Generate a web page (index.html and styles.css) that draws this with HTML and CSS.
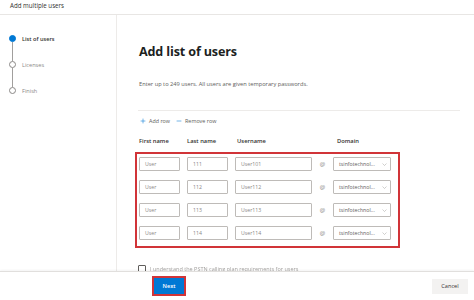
FILE: index.html
```html
<!DOCTYPE html>
<html>
<head>
<meta charset="utf-8">
<link rel="stylesheet" href="styles.css">
</head>
<body>
<div class="page">
  <div class="topbar">Add multiple users</div>
  <div class="main">
    <div class="sidebar">
      <div class="step active"><span class="dot"></span><span class="slabel">List of users</span></div>
      <div class="conn"></div>
      <div class="step"><span class="dot"></span><span class="slabel">Licenses</span></div>
      <div class="conn"></div>
      <div class="step"><span class="dot"></span><span class="slabel">Finish</span></div>
    </div>
    <div class="content">
      <h1 class="title">Add list of users</h1>
      <p class="desc">Enter up to 249 users. All users are given temporary passwords.</p>
      <div class="rule"></div>
      <div class="actions">
        <span class="act"><svg class="ico" viewBox="0 0 10 10"><path d="M5 1v8M1 5h8" stroke="#0078d4" stroke-width="0.9" fill="none"/></svg>Add row</span>
        <span class="act"><svg class="ico" viewBox="0 0 10 10"><path d="M1 5h8" stroke="#0078d4" stroke-width="0.9" fill="none"/></svg>Remove row</span>
      </div>
      <div class="heads">
        <span class="h h1">First name</span>
        <span class="h h2">Last name</span>
        <span class="h h3">Username</span>
        <span class="h h4">Domain</span>
      </div>
      <div class="grid">
        <div class="row">
          <div class="inp w1">User</div><div class="inp w1">111</div><div class="inp w3">User101</div><span class="at">@</span>
          <div class="inp sel">tsinfotechnol...<svg class="chev" viewBox="0 0 10 6"><path d="M1 1l4 4 4-4" stroke="#8a8886" stroke-width="0.8" fill="none"/></svg></div>
        </div>
        <div class="row">
          <div class="inp w1">User</div><div class="inp w1">112</div><div class="inp w3">User112</div><span class="at">@</span>
          <div class="inp sel">tsinfotechnol...<svg class="chev" viewBox="0 0 10 6"><path d="M1 1l4 4 4-4" stroke="#8a8886" stroke-width="0.8" fill="none"/></svg></div>
        </div>
        <div class="row">
          <div class="inp w1">User</div><div class="inp w1">113</div><div class="inp w3">User113</div><span class="at">@</span>
          <div class="inp sel">tsinfotechnol...<svg class="chev" viewBox="0 0 10 6"><path d="M1 1l4 4 4-4" stroke="#8a8886" stroke-width="0.8" fill="none"/></svg></div>
        </div>
        <div class="row">
          <div class="inp w1">User</div><div class="inp w1">114</div><div class="inp w3">User114</div><span class="at">@</span>
          <div class="inp sel">tsinfotechnol...<svg class="chev" viewBox="0 0 10 6"><path d="M1 1l4 4 4-4" stroke="#8a8886" stroke-width="0.8" fill="none"/></svg></div>
        </div>
      </div>
      <div class="check"><span class="box"></span><span class="ctext">I understand the PSTN calling plan requirements for users</span></div>
    </div>
  </div>
  <div class="footer">
    <div class="nextwrap"><span class="next">Next</span></div>
    <span class="cancel">Cancel</span>
  </div>
</div>
</body>
</html>
```
FILE: styles.css
```css
* { box-sizing: border-box; }
html, body { margin: 0; padding: 0; background: #fff; }
body { font-family: "Open Sans", "Noto Sans", sans-serif; color: #323130; }
.page { width: 474px; height: 300px; display: flex; flex-direction: column; overflow: hidden; }
.topbar { height: 15px; flex: none; border-bottom: 1px solid #e8e6e4; font-size: 6.2px; line-height: 12px; padding-left: 10px; color: #323130; }
.main { flex: 1; display: flex; overflow: hidden; min-height: 0; }
.sidebar { width: 117px; flex: none; border-right: 1px solid #edebe9; padding-top: 20px; padding-left: 9px; }
.step { display: flex; align-items: center; height: 7px; }
.dot { width: 7px; height: 7px; border-radius: 50%; border: 1px solid #8a8886; background: #fff; flex: none; }
.step.active .dot { background: #0078d4; border-color: #0078d4; }
.slabel { margin-left: 6px; font-size: 5.6px; color: #8a8886; white-space: nowrap; }
.step.active .slabel { color: #323130; font-weight: 600; }
.conn { width: 1px; height: 19px; background: #a19f9d; margin-left: 3px; }
.content { flex: 1; padding-left: 18px; min-width: 0; }
.title { margin: 28px 0 0 4px; font-size: 12.6px; font-weight: 700; line-height: 18px; color: #201f1e; letter-spacing: -0.15px; }
.desc { margin: 19px 0 0 4px; font-size: 5.7px; color: #605e5c; line-height: 8px; }
.rule { margin: 22px 14px 0 3px; height: 1px; background: #edebe9; }
.actions { display: flex; gap: 6px; margin: 5px 0 0 5px; height: 9px; align-items: center; }
.act { display: flex; align-items: center; gap: 3px; font-size: 5.4px; color: #605e5c; }
.ico { width: 6px; height: 6px; }
.heads { position: relative; height: 10px; margin-top: 11px; font-size: 5.8px; color: #323130; font-weight: 600; }
.h { position: absolute; top: 0; line-height: 10px; }
.h1 { left: 4px; } .h2 { left: 52px; } .h3 { left: 102px; } .h4 { left: 202px; }
.grid { margin-top: 6px; width: 265px; border: 2px solid #d13438; padding: 3px 0 6px 2px; display: flex; flex-direction: column; gap: 9px; }
.row { display: flex; align-items: center; height: 14px; }
.inp { height: 14px; border: 1px solid #bebbb8; border-radius: 1px; font-size: 5.2px; color: #8a8886; line-height: 12px; padding-left: 5px; white-space: nowrap; flex: none; }
.w1 { width: 41px; margin-right: 7px; }
.w3 { width: 77px; }
.at { width: 21px; text-align: center; font-size: 6px; color: #8a8886; }
.sel { width: 58px; display: flex; align-items: center; justify-content: space-between; padding-right: 3px; color: #605e5c; }
.chev { width: 5px; height: 3px; }
.check { display: flex; align-items: center; margin: 17px 0 0 3px; gap: 4px; }
.box { width: 8px; height: 8px; border: 1px solid #605e5c; border-radius: 1px; flex: none; }
.ctext { font-size: 5.5px; color: #a19f9d; filter: blur(0.6px); white-space: nowrap; }
.footer { height: 29px; flex: none; border-top: 1px solid #e1dfdd; box-shadow: 0 -1px 2px rgba(0,0,0,0.05); display: flex; align-items: center; justify-content: space-between; padding: 0 6px 0 152px; background: #fff; }
.nextwrap { border: 2px solid #d13438; padding: 0; }
.next { display: block; width: 30px; height: 16px; background: #0078d4; color: #fff; font-size: 5.6px; font-weight: 600; text-align: center; line-height: 16px; }
.cancel { width: 36px; height: 15px; background: #f3f2f1; font-size: 5.6px; color: #323130; text-align: center; line-height: 15px; }
```
